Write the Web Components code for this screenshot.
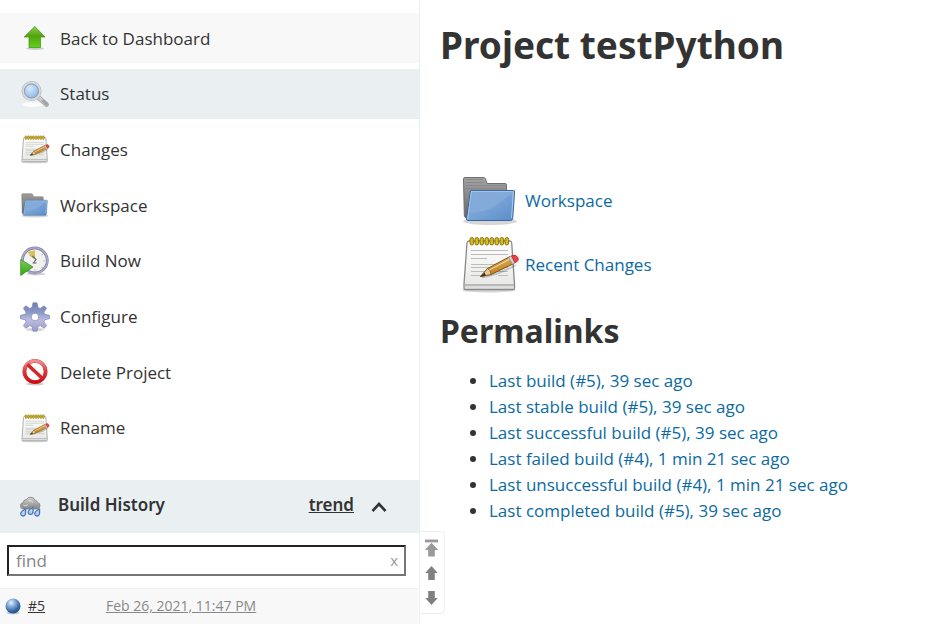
<!DOCTYPE html>
<html lang="en">
<head>
<meta charset="utf-8">
<title>testPython</title>
<style>
  body { margin: 0; background: #fff; color: #333; font-family: "Open Sans", "Noto Sans", sans-serif; font-size: 17px; }
</style>
</head>
<body>
<project-page></project-page>
<script>
const ICONS = {
  up: `<svg viewBox="0 0 30 30"><defs><linearGradient id="g" x1="0" y1="0" x2="0" y2="1"><stop offset="0" stop-color="#8fce4f"/><stop offset=".45" stop-color="#52a50e"/><stop offset="1" stop-color="#5fd01a"/></linearGradient></defs>
    <ellipse cx="15" cy="25.500" rx="9" ry="1.500" fill="#000" opacity=".18"/>
    <path d="M14.800 3.500 25 14H20.500V24.500H9V14H4.200Z" fill="url(#g)" stroke="#4a9a1a" stroke-width=".8" stroke-linejoin="round"/></svg>`,
  search: `<svg viewBox="0 0 30 30"><defs><radialGradient id="g" cx=".4" cy=".35" r=".7"><stop offset="0" stop-color="#d9e9fb"/><stop offset="1" stop-color="#83aee2"/></radialGradient></defs>
    <ellipse cx="13" cy="25.500" rx="11" ry="2.500" fill="#fff" opacity=".8"/>
    <path d="M18 18 26.500 25.500" stroke="#a2a2a2" stroke-width="4.800" stroke-linecap="round"/><path d="M18 18 26.500 25.500" stroke="#cdcdcd" stroke-width="3.400" stroke-linecap="round"/><path d="M23 22 26.500 25.200" stroke="#a2a2a2" stroke-width="3" stroke-linecap="round"/>
    <circle cx="11.500" cy="12" r="8.500" fill="url(#g)" stroke="#b4b4b4" stroke-width="3"/><circle cx="11.500" cy="12" r="8.500" fill="none" stroke="#dadada" stroke-width="1.800"/><circle cx="11.500" cy="12" r="7" fill="none" stroke="#6c94c8" stroke-width=".7"/></svg>`,
  notepad: `<svg viewBox="0 0 60 60"><defs><linearGradient id="g" x1="0" y1="0" x2="0" y2="1"><stop offset="0" stop-color="#fff"/><stop offset="1" stop-color="#e6e6e4"/></linearGradient><linearGradient id="p" x1="0" y1="0" x2=".4" y2="1"><stop offset="0" stop-color="#efc27c"/><stop offset="1" stop-color="#b87914"/></linearGradient></defs>
    <ellipse cx="29" cy="56" rx="27" ry="2.500" fill="#000" opacity=".16"/>
    <path d="M9 7H50Q51.500 7 51.700 9L54.500 50V54Q54.500 55.500 53 55.500H5.500Q4 55.500 4 54V50L7 9Q7.200 7 9 7Z" fill="url(#g)" stroke="#888" stroke-width="1.300"/>
    <path d="M4.500 51H54" stroke="#aaa" stroke-width="1.300"/><path d="M5 53H53.500" stroke="#ddd" stroke-width="2"/>
    <path d="M11 16.500H48M11 20.500H48M11 24.500H27M11 30.500H48M11 33.500H48M11 37.500H48M11 41.500H26M38 41.500H48" stroke="#bcbcbc" stroke-width="1.200"/>
    <g fill="#d7b91c" stroke="#806b10" stroke-width=".9">${[10,15,20,25,30,35,40,45].map(x => `<rect x="${x}" y="3.500" width="3.600" height="7.500" rx="1.800"/>`).join('')}</g>
    <path d="M22 43.500Q38 41 56 31" stroke="#000" stroke-width="2" opacity=".18" fill="none"/>
    <path d="M20.500 42.500 27.500 34.500 50 22.500 54 29.500 31 40.500Z" fill="url(#p)" stroke="#7b5313"/><path d="M20.500 42.500 27.500 34.500Q31 36 31 40.500Z" fill="#e8c795" stroke="#7b5313" stroke-width=".7"/><path d="M20 43 24.500 38.500 26 41.500Z" fill="#3b3428"/>
    <path d="M29.500 36 51 24.500" stroke="#fbe0a6" stroke-width="1"/>
    <path d="M48.500 23.300 51.500 21.800 55 28.800 52.500 30.300Z" fill="#cfcfcf" stroke="#888" stroke-width=".6"/><path d="M51.500 21.800Q55.500 19.800 57.700 23.300T55 28.800Z" fill="#ee3f45" stroke="#a33" stroke-width=".8"/></svg>`,
  folder: `<svg viewBox="0 0 60 60"><defs><linearGradient id="g" x1="0" y1="0" x2="1" y2="1"><stop offset="0" stop-color="#7aa5d8"/><stop offset=".5" stop-color="#79a3d6"/><stop offset="1" stop-color="#5a8cc8"/></linearGradient><linearGradient id="b" x1="0" y1="0" x2="0" y2="1"><stop offset="0" stop-color="#a5a5a5"/><stop offset="1" stop-color="#666"/></linearGradient></defs>
    <ellipse cx="30" cy="51.500" rx="27" ry="3.500" fill="#000" opacity=".16"/>
    <path d="M5 7.500H23.500Q25 7.500 25.500 9L27 13.500H45Q46.500 13.500 46.500 15V48H7Q4.500 48 4.300 45L3.500 9Q3.500 7.500 5 7.500Z" fill="url(#b)" stroke="#6e6e6e"/>
    <path d="M5.500 9.500H23M5 12.500H24M5 15.500H45M5 18.500H45" stroke="#858585" stroke-width=".9"/>
    <path d="M12 20.500H53.500Q54.700 20.500 54.600 22L52.700 48.500Q52.500 50.500 50.500 50.500H8Q6.200 50.500 6.500 48.500L10.300 22Q10.500 20.500 12 20.500Z" fill="url(#g)" stroke="#3867a4"/>
    <path d="M7.700 49.300 11.400 21.700H53.400L51.500 48" fill="none" stroke="#b2cff0" stroke-width=".9"/><path d="M10 43Q32 41 42 31T53 28L53.300 23H12.500Z" fill="#fff" opacity=".08"/></svg>`,
  clock: `<svg viewBox="0 0 30 30"><defs><linearGradient id="g" x1="0" y1="0" x2="0" y2="1"><stop offset="0" stop-color="#85c95c"/><stop offset="1" stop-color="#2aaa08"/></linearGradient></defs>
    <ellipse cx="16" cy="28" rx="10" ry="1.500" fill="#000" opacity=".16"/>
    <circle cx="14.800" cy="14.500" r="12.500" fill="#f1f1ef" stroke="#8585a6" stroke-width="2.800"/><circle cx="14.800" cy="14.500" r="12.600" fill="none" stroke="#aaaac8" stroke-width="1.400"/>
    <path d="M15 13.500 7.500 6.500Q11 4 15 4.500Z" fill="#dbc24f"/><path d="M14 13 8.500 9 14 9Z" fill="#c9b86f"/>
    <g fill="#bbb"><circle cx="22" cy="8.500" r=".8"/><circle cx="24" cy="15" r=".8"/><circle cx="22" cy="21.500" r=".8"/><circle cx="15" cy="24" r=".8"/></g>
    <path d="M12.500 10 16 13.500 13.500 17H16.500" fill="none" stroke="#666" stroke-width="1.200"/>
    <path d="M.700 13.500V29.500L13 21Z" fill="url(#g)" stroke="#3c8c2c" stroke-width=".8"/></svg>`,
  gear: `<svg viewBox="0 0 30 30"><defs><linearGradient id="g" x1="0" y1="0" x2="0" y2="1"><stop offset="0" stop-color="#6c7eb0"/><stop offset=".35" stop-color="#8e9ac8"/><stop offset=".6" stop-color="#bcbce0"/><stop offset="1" stop-color="#9a9ac8"/></linearGradient></defs>
    <ellipse cx="15" cy="27.500" rx="9" ry="1.800" fill="#000" opacity=".16"/>
    <path fill="url(#g)" stroke="#8088b0" stroke-width=".7" stroke-linejoin="round" fill-rule="evenodd" d="M13 .800H17L18 5.500 20.200 6.400 24.200 3.800 26.600 6.300 23.900 10.200 24.800 12.300 29.500 13.300V16.700L24.800 17.700 23.900 19.900 26.600 23.800 24.200 26.200 20.200 23.600 18 24.500 17 29.200H13L12 24.500 9.800 23.600 5.800 26.200 3.400 23.800 6.100 19.900 5.200 17.700.500 16.700V13.300L5.200 12.300 6.100 10.200 3.400 6.300 5.800 3.800 9.800 6.400 12 5.500ZM15 11.200A3.800 3.800 0 1 0 15 18.800 3.800 3.800 0 1 0 15 11.200Z"/></svg>`,
  stop: `<svg viewBox="0 0 30 30"><defs><linearGradient id="g" x1="0" y1="0" x2="0" y2="1"><stop offset="0" stop-color="#ee9090"/><stop offset=".5" stop-color="#dd3538"/><stop offset="1" stop-color="#cf0f13"/></linearGradient></defs>
    <ellipse cx="15" cy="27" rx="9" ry="1.500" fill="#000" opacity=".2"/>
    <circle cx="15" cy="14.500" r="10.600" fill="#fff" fill-opacity=".9" stroke="#c0484a" stroke-width="3.800"/><circle cx="15" cy="14.500" r="10.600" fill="none" stroke="url(#g)" stroke-width="3.200"/><path d="M7.500 7.500 22.500 21.500" stroke="#d0282c" stroke-width="3.600"/></svg>`,
  rain: `<svg viewBox="0 0 22 22"><defs><linearGradient id="g" x1="0" y1="0" x2="0" y2="1"><stop offset="0" stop-color="#d2d2d0"/><stop offset="1" stop-color="#858583"/></linearGradient></defs>
    <path d="M3.500 13Q.500 13 .500 9.800.500 6.800 3.200 6.500 3.500 3.500 6.500 3.500 8 .800 11 1.200 14.500 1.500 15 4.500 17 4.300 17.500 6.500 20.200 7 20 9.800 19.700 13 16.500 13Z" fill="url(#g)" stroke="#8a8a88" stroke-width=".9"/>
    <path d="M3.500 9Q6 11 8 8.500M8.500 5Q11.500 4 13 6.500" stroke="#eee" fill="none" stroke-width=".8"/>
    <g fill="#b8d2f4" stroke="#4a76bd" stroke-width="1.300"><path d="M5.500 13Q.500 15.500.700 18A2.400 2.400 0 0 0 5.400 18.200Q5.700 16 5.500 13Z"/><path d="M13 11.500Q8 14 8.200 16.300A2.400 2.400 0 0 0 12.900 16.500Q13.200 14.500 13 11.500Z"/><path d="M19.500 13Q14.500 15.500 14.700 18A2.400 2.400 0 0 0 19.400 18.200Q19.700 16 19.500 13Z"/></g></svg>`,
  ball: `<svg viewBox="0 0 18 18"><defs><radialGradient id="g" cx=".38" cy=".28" r=".75"><stop offset="0" stop-color="#e8f1fb"/><stop offset=".35" stop-color="#88aedd"/><stop offset=".8" stop-color="#2c5f9f"/><stop offset="1" stop-color="#24528c"/></radialGradient></defs><ellipse cx="9" cy="16" rx="6.500" ry="1.500" fill="#000" opacity=".2"/><circle cx="9" cy="9" r="7.500" fill="url(#g)"/></svg>`,
  chevron: `<svg viewBox="0 0 16 16"><path d="M1.500 12 8 5 14.500 12" fill="none" stroke="#333" stroke-width="2.600"/></svg>`,
  top: `<svg viewBox="0 0 16 20"><path d="M1 1H15V4H1Z" fill="#999"/><path d="M8 4.500 15 12H11.500V19H4.500V12H1Z" fill="#999"/></svg>`,
  prev: `<svg viewBox="0 0 16 20"><path d="M8 2.500 14.700 10H11.500V17.500H4.500V10H1.300Z" fill="#808080"/></svg>`,
  next: `<svg viewBox="0 0 16 20"><path d="M8 17.500 14.700 10H11.500V2.500H4.500V10H1.300Z" fill="#808080"/></svg>`
};

function define(name, html) {
  const template = document.createElement('template');
  template.innerHTML = html;
  customElements.define(name, class extends HTMLElement {
    constructor() {
      super();
      this.attachShadow({ mode: 'open' }).append(template.content.cloneNode(true));
    }
    connectedCallback() {
      const link = this.shadowRoot.querySelector('a[data-link]');
      if (link) link.href = this.getAttribute('href') || '#';
      const icon = this.shadowRoot.querySelector('ui-icon[data-icon]');
      if (icon) icon.setAttribute('name', this.getAttribute('icon'));
    }
  });
}

customElements.define('ui-icon', class extends HTMLElement {
  static get observedAttributes() { return ['name']; }
  constructor() { super(); this.attachShadow({ mode: 'open' }); }
  attributeChangedCallback() {
    this.shadowRoot.innerHTML = `<style>:host{display:block;flex:none;width:30px;height:30px}svg{display:block;width:100%;height:100%}</style>${ICONS[this.getAttribute('name')] || ''}`;
    this.shadowRoot.querySelector('svg')?.setAttribute('aria-hidden', 'true');
  }
});

define('side-task', `<style>
  :host { display: block; }
  a { display: flex; align-items: center; gap: 10px; height: 50px; padding: 0 20px; color: #333; font-weight: 500; text-decoration: none; }
  :host([shade=light]) a { background: #f8f8f8; }
  :host([shade=active]) a { background: #eaeff2; }
</style><a data-link><ui-icon data-icon></ui-icon><slot></slot></a>`);

define('main-link', `<style>
  :host { display: block; }
  a { display: inline-flex; align-items: center; gap: 5px; color: #0b6aa2; font-weight: 500; text-decoration: none; vertical-align: top; }
  ui-icon { width: 60px; height: 60px; }
</style><a data-link><ui-icon data-icon></ui-icon><slot></slot></a>`);

define('perma-link', `<style>
  :host { display: list-item; line-height: 26px; }
  a { color: #0b6aa2; font-weight: 500; text-decoration: none; }
</style><a data-link><slot></slot></a>`);

define('page-nav', `<style>
  :host { display: flex; flex-direction: column; gap: 5px; box-sizing: border-box; padding: 6px 5px 5px 4px; border: 1px solid #eaeff2; border-radius: 0 4px 4px 0; background: #fff; }
  button { display: block; padding: 0; border: 0; background: none; }
  ui-icon { width: 15px; height: 20px; }
</style>
<button aria-label="Newest builds"><ui-icon name="top"></ui-icon></button>
<button aria-label="Newer builds"><ui-icon name="prev"></ui-icon></button>
<button aria-label="Older builds"><ui-icon name="next"></ui-icon></button>`);

define('build-row', `<style>
  :host { display: flex; align-items: center; box-sizing: border-box; height: 36px; margin-right: 1px; padding: 0 0 2px 4px; border-top: 1px solid #eaeff2; background: #f8f8f8; font-size: 14px; }
  ui-icon { width: 18px; height: 18px; }
  .number { flex: 0 0 78px; margin-left: 6px; }
  .number a { color: #333; }
  .date { color: #888; }
</style><ui-icon name="ball"></ui-icon><span class="number"><a href="#5"><slot name="number"></slot></a></span><a class="date" href="#5"><slot></slot></a>`);

define('build-history', `<style>
  :host { display: block; }
  header { display: flex; align-items: center; box-sizing: border-box; height: 53px; padding: 0 32px 4px 20px; background: #eaeff2; font: 600 17px "Noto Sans", sans-serif; }
  header > ui-icon { width: 22px; height: 22px; margin: 4px 16px 0 0; }
  h2 { flex: 1; margin: 0; font: inherit; }
  header a { color: #333; }
  button { display: block; padding: 0; border: 0; background: none; }
  header button { margin: 4px 0 0 17px; }
  header button ui-icon { width: 16px; height: 16px; }
  .find { display: flex; align-items: center; margin: 12px 13px 12px 7px; height: 31px; box-sizing: border-box; padding: 0 6px 0 7px; border: 2px solid; border-color: #222 #767676 #767676 #222; background: #fff; }
  input { flex: 1; min-width: 0; padding: 0; border: 0; outline: 0; font: 400 17px "Open Sans", "Noto Sans", sans-serif; }
  input::placeholder { color: #858585; opacity: 1; }
  .find button { padding-bottom: 2px; font: 15px "Open Sans", sans-serif; color: #999; }
</style>
<header><ui-icon name="rain"></ui-icon><h2>Build History</h2><a href="#trend">trend</a><button aria-label="Collapse"><ui-icon name="chevron"></ui-icon></button></header>
<div class="find"><input type="text" placeholder="find" aria-label="Find builds"><button aria-label="Clear">x</button></div>
<slot></slot>`);

define('side-panel', `<style>
  :host { display: block; position: relative; box-sizing: border-box; border-right: 1px solid #eaeff2; padding-top: 13px; }
  nav { display: grid; align-content: space-between; min-height: 440px; margin-bottom: 27px; }
  page-nav { position: absolute; left: 100%; bottom: 10px; }
</style>
<nav aria-label="Project">
  <side-task icon="up" shade="light">Back to Dashboard</side-task>
  <side-task icon="search" shade="active">Status</side-task>
  <side-task icon="notepad">Changes</side-task>
  <side-task icon="folder">Workspace</side-task>
  <side-task icon="clock">Build Now</side-task>
  <side-task icon="gear">Configure</side-task>
  <side-task icon="stop">Delete Project</side-task>
  <side-task icon="notepad">Rename</side-task>
</nav>
<build-history><build-row><span slot="number">#5</span>Feb 26, 2021, 11:47 PM</build-row></build-history>
<page-nav></page-nav>`);

define('project-main', `<style>
  :host { display: block; padding: 15px 20px; }
  h1, h2 { font-family: "Noto Sans", sans-serif; font-weight: 700; }
  h1 { margin: 0; font-size: 37px; line-height: 60px; }
  .links { display: grid; gap: 4px; margin: 95px 0 0 20px; }
  h2 { margin: 12px 0; font-size: 32px; line-height: 50px; }
  ul { margin: 0; padding-left: 49px; }
</style>
<h1>Project testPython</h1>
<div class="links"><main-link icon="folder">Workspace</main-link><main-link icon="notepad">Recent Changes</main-link></div>
<h2>Permalinks</h2>
<ul role="list">
  <perma-link role="listitem">Last build (#5), 39 sec ago</perma-link>
  <perma-link role="listitem">Last stable build (#5), 39 sec ago</perma-link>
  <perma-link role="listitem">Last successful build (#5), 39 sec ago</perma-link>
  <perma-link role="listitem">Last failed build (#4), 1 min 21 sec ago</perma-link>
  <perma-link role="listitem">Last unsuccessful build (#4), 1 min 21 sec ago</perma-link>
  <perma-link role="listitem">Last completed build (#5), 39 sec ago</perma-link>
</ul>`);

define('project-page', `<style>
  :host { display: grid; grid-template-columns: minmax(320px, 420px) 1fr; min-height: 100vh; }
</style><side-panel></side-panel><project-main></project-main>`);
</script>
</body>
</html>
